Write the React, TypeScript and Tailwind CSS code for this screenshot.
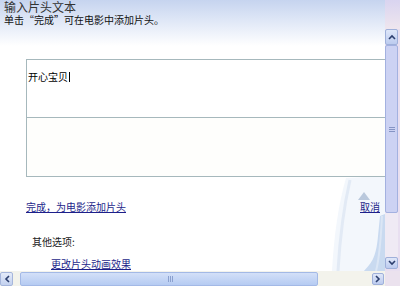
import React from "react";

const font = { fontFamily: '"SimSun", "Noto Sans CJK SC", "Noto Sans", sans-serif' };

function UpArrow() {
  return (
    <svg width="8" height="6" viewBox="0 0 8 6">
      <path d="M1 5 L4 2 L7 5" fill="none" stroke="#2c3f6e" strokeWidth="1.6" />
    </svg>
  );
}
function DownArrow() {
  return (
    <svg width="8" height="6" viewBox="0 0 8 6">
      <path d="M1 1 L4 4 L7 1" fill="none" stroke="#2c3f6e" strokeWidth="1.6" />
    </svg>
  );
}
function LeftArrow() {
  return (
    <svg width="6" height="8" viewBox="0 0 6 8">
      <path d="M5 1 L2 4 L5 7" fill="none" stroke="#2c3f6e" strokeWidth="1.6" />
    </svg>
  );
}
function RightArrow() {
  return (
    <svg width="6" height="8" viewBox="0 0 6 8">
      <path d="M1 1 L4 4 L1 7" fill="none" stroke="#2c3f6e" strokeWidth="1.6" />
    </svg>
  );
}

export default function App() {
  return (
    <div className="w-[400px] h-[286px] overflow-hidden flex flex-col bg-white relative" style={font}>
      <div className="flex h-[271px]">
        {/* main content */}
        <div className="w-[385px] flex flex-col relative">
          <svg className="absolute left-[318px] top-[176px]" width="67" height="95" viewBox="0 0 67 95">
            <path d="M14 95 C16 60 20 30 28 2 L67 0 L67 95 Z" fill="#f3f7fc" />
            <path d="M20 95 C22 60 26 30 32 4" fill="none" stroke="#e2eaf5" strokeWidth="3" />
            <path d="M40 24 L46 16 L52 24 Z" fill="#b9c8dc" />
            <path d="M46 95 C52 88 58 84 60 60 L62 40 L67 38 L67 95 Z" fill="#c9daf0" />
            <path d="M58 95 C62 80 63 60 64 40" fill="none" stroke="#dbe6f5" strokeWidth="2" />
          </svg>
          <div className="h-[46px] bg-gradient-to-b from-[#c6d4ef] to-white pl-[4px]">
            <div className="text-[12px] leading-[14px] text-[#333]">输入片头文本</div>
            <div className="text-[10px] leading-[12px] text-[#111]">单击“完成”可在电影中添加片头。</div>
          </div>
          <div className="ml-[26px] mt-[13px] w-[359px] h-[118px] border-l border-t border-b border-[#a6b8bc] flex flex-col relative">
            <div className="h-[58px] border-b border-[#a6b8bc] bg-white pl-[1px] pt-[2px]">
              <span className="text-[10px] leading-[11px] text-black">开心宝贝</span>
              <span className="inline-block w-px h-[10px] bg-black align-middle ml-px" />
            </div>
            <div className="flex-1 bg-[#fefefc]" />
          </div>
          <div className="relative flex justify-between mt-[24px] pl-[26px] pr-[5px]">
            <span className="text-[10px] leading-[11px] text-[#1d1f8a] underline">完成，为电影添加片头</span>
            <span className="text-[10px] leading-[11px] text-[#1d1f8a] underline">取消</span>
          </div>
          <div className="relative mt-[24px] pl-[32px] text-[10px] leading-[11px] text-[#222]">其他选项:</div>
          <div className="relative mt-[11px] pl-[51px] text-[10px] leading-[11px] text-[#1d1f8a] underline">更改片头动画效果</div>
        </div>
        {/* vertical scrollbar */}
        <div className="w-[15px] flex flex-col bg-[#e8dff0]">
          <div className="h-[29px] bg-gradient-to-b from-[#d9d4f0] to-[#efe6ee]" />
          <div className="h-[16px] w-[13px] flex items-center justify-center bg-gradient-to-b from-[#dfe7f9] to-[#bccbef] border border-[#9fb0da] rounded-[2px]">
            <UpArrow />
          </div>
          <div className="h-[168px] w-[13px] bg-[#ccd2f3] border border-[#a3b1e0] rounded-[2px] flex flex-col items-center justify-center">
            <div className="flex flex-col gap-[1px]">
              <div className="w-[6px] h-px bg-[#8594c4]" />
              <div className="w-[6px] h-px bg-[#8594c4]" />
              <div className="w-[6px] h-px bg-[#8594c4]" />
            </div>
          </div>
          <div className="h-[44px] w-[13px] bg-[#efeaf4]" />
          <div className="h-[12px] w-[13px] flex items-center justify-center bg-gradient-to-b from-[#dfe7f9] to-[#bccbef] border border-[#9fb0da] rounded-[2px]">
            <DownArrow />
          </div>
          <div className="flex-1" />
        </div>
      </div>
      {/* horizontal scrollbar */}
      <div className="h-[15px] flex bg-[#f3f3ec]">
        <div className="w-[385px] flex items-center">
          <div className="w-[13px] h-[14px] flex items-center justify-center bg-gradient-to-b from-[#e4ebf9] to-[#c3d1ef] border border-[#a6b6dc] rounded-[2px]">
            <LeftArrow />
          </div>
          <div className="ml-[7px] w-[298px] h-[14px] bg-gradient-to-b from-[#d3e0f8] to-[#b5cbf2] border border-[#a3b9e6] rounded-[2px] flex items-center justify-center">
            <div className="flex gap-[1px] ml-[2px]">
              <div className="w-px h-[6px] bg-[#8aa0cf]" />
              <div className="w-px h-[6px] bg-[#8aa0cf]" />
              <div className="w-px h-[6px] bg-[#8aa0cf]" />
            </div>
          </div>
          <div className="ml-[54px] w-[12px] h-[12px] flex items-center justify-center bg-gradient-to-b from-[#dfe7f9] to-[#bccbef] border border-[#9fb0da] rounded-[2px]">
            <RightArrow />
          </div>
        </div>
        <div className="flex-1 bg-[#ebe2ee]" />
      </div>
    </div>
  );
}
